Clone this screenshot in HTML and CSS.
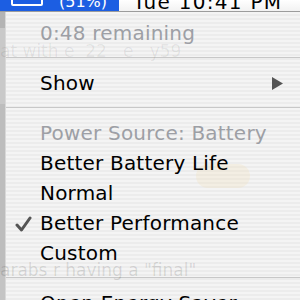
FILE: index.html
```html
<!DOCTYPE html>
<html>
<head>
<meta charset="utf-8">
<link rel="stylesheet" href="styles.css">
</head>
<body>
<div class="screen">
  <div class="menubar">
    <div class="active">
      <span class="batt"></span>
      <span class="pct">(51%)</span>
    </div>
    <span class="clock">Tue 10:41 PM</span>
  </div>
  <div class="body">
    <div class="strip"></div>
    <div class="menu">
      <div class="ghost">
        <div class="g1">at with e &nbsp;22 &nbsp;&nbsp;e &nbsp;&nbsp;y59</div>
        <div class="g3"></div>
        <div class="g4">arabs r having a "final"</div>
      </div>
      <div class="item dim">0:48 remaining</div>
      <div class="sep"></div>
      <div class="item sub">Show <svg class="arrow" width="11" height="13" viewBox="0 0 11 13"><path d="M0 0 L11 6.5 L0 13 Z" fill="#555"/></svg></div>
      <div class="sep"></div>
      <div class="item dim">Power Source: Battery</div>
      <div class="item">Better Battery Life</div>
      <div class="item">Normal</div>
      <div class="item checked"><svg class="check" width="17" height="16" viewBox="0 0 17 16"><path d="M2 9 L6.5 14 L15 2" fill="none" stroke="#555" stroke-width="3" stroke-linecap="round" stroke-linejoin="round"/></svg>Better Performance</div>
      <div class="item">Custom</div>
      <div class="sep"></div>
      <div class="item">Open Energy Saver...</div>
    </div>
  </div>
</div>
</body>
</html>
```
FILE: styles.css
```css
html, body {
  margin: 0;
  padding: 0;
  background: #f0f0f0;
}
.screen {
  width: 300px;
  height: 300px;
  overflow: hidden;
  display: flex;
  flex-direction: column;
  font-family: "DejaVu Sans", "Liberation Sans", sans-serif;
}
.menubar {
  height: 11px;
  flex: none;
  display: flex;
  overflow: hidden;
  background: linear-gradient(#ffffff, #f2f2f2);
  border-bottom: 1px solid #9c9c9c;
}
.active {
  width: 119px;
  height: 11px;
  background: #1c5ee2;
  display: flex;
  flex: none;
  overflow: hidden;
  color: #fff;
}
.batt {
  width: 28px;
  height: 10px;
  margin: -8px 0 0 11px;
  border: 2px solid #fff;
  border-radius: 2px;
  flex: none;
}
.pct {
  margin: -7px 0 0 16px;
  font-size: 16px;
  line-height: 18px;
}
.clock {
  margin: -7px 0 0 14px;
  font-size: 20px;
  line-height: 18px;
  letter-spacing: 1.3px;
  color: #000;
  white-space: nowrap;
}
.body {
  flex: 1;
  display: flex;
  min-height: 0;
}
.strip {
  width: 5px;
  flex: none;
  background: linear-gradient(#b4b4b4 0 16px, #c9c9c9 16px 92px, #bdbdbd 92px 260px, #c4c4c4 260px);
  border-right: 1px solid #d8d8d8;
}
.menu {
  flex: 1;
  position: relative;
  padding-top: 6px;
  background: repeating-linear-gradient(to bottom, #f4f4f4 0 2px, #ececec 2px 4px);
}
.ghost {
  position: absolute;
  inset: 0;
  color: rgba(0, 0, 0, 0.07);
  font-size: 17px;
  pointer-events: none;
}
.g1 { position: absolute; left: -6px; top: 29px; }
.g3 { position: absolute; left: 190px; top: 152px; width: 54px; height: 24px; border-radius: 12px; background: rgba(240, 220, 170, 0.22); }
.g4 { position: absolute; left: -6px; top: 248px; color: rgba(0,0,0,0.12); }
.item {
  position: relative;
  height: 30px;
  line-height: 30px;
  padding-left: 34px;
  font-size: 20px;
  letter-spacing: 0.2px;
  color: #000;
  white-space: nowrap;
  display: flex;
  align-items: center;
}
.item.dim {
  color: #9d9fa5;
}
.item.sub {
  justify-content: space-between;
  padding-right: 17px;
}
.arrow {
  display: block;
}
.check {
  position: absolute;
  left: 9px;
  top: 8px;
}
.sep {
  height: 1px;
  background: #c8c8c8;
  margin: 9px 0 10px;
}
```
